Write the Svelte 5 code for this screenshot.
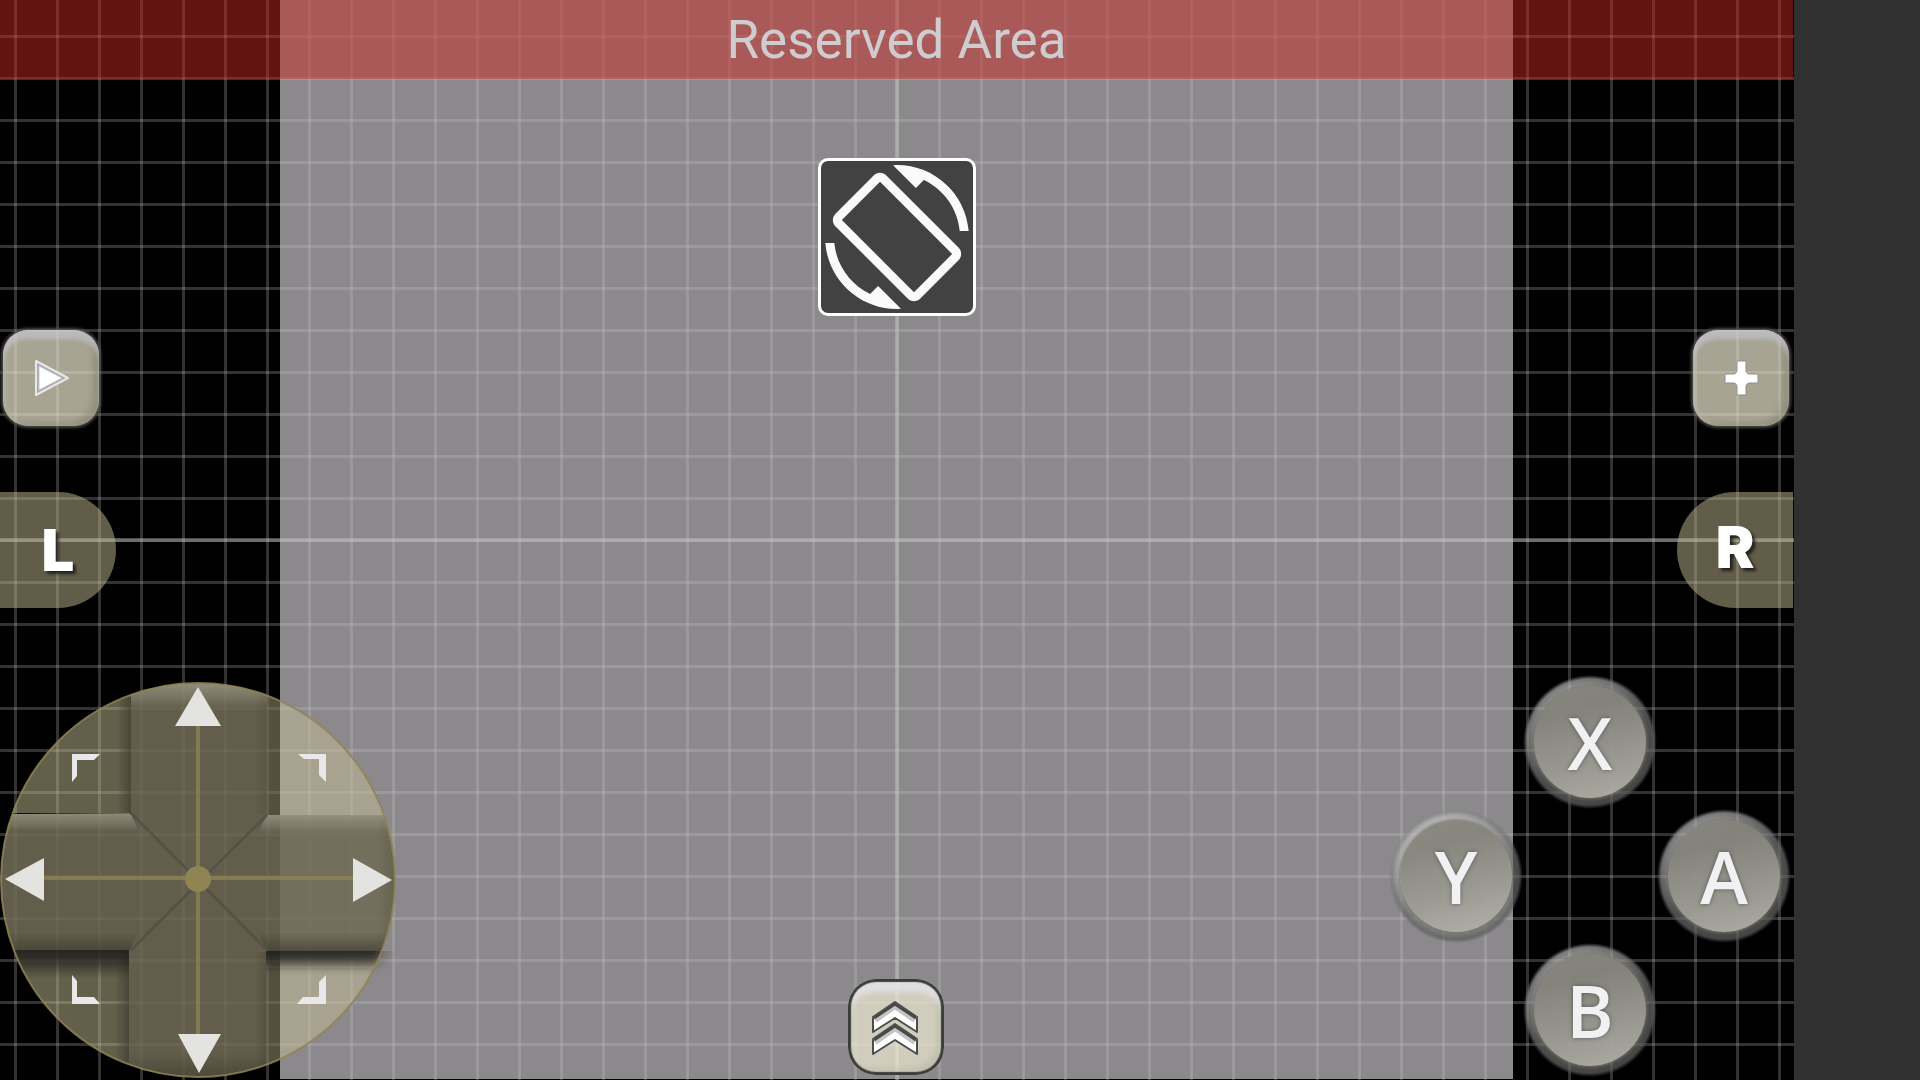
<script>
	const faceButtons = ['X', 'Y', 'A', 'B'];
</script>

<div class="screen">
	<main class="layout">
		<div class="game"></div>
		<div class="grid"></div>
		<div class="axis horizontal"></div>
		<div class="axis vertical"></div>

		<header class="reserved">Reserved Area</header>

		<button class="rotate" aria-label="Rotate screen">
			<svg viewBox="0 0 24 24" width="144" height="144" fill="#fafafa">
				<path d="M16.48 2.52c3.27 1.55 5.61 4.72 5.97 8.48h1.5C23.44 4.84 18.29 0 12 0l-.66.03 3.81 3.81 1.33-1.32zm-6.25-.77c-.59-.59-1.54-.59-2.12 0L1.75 8.11c-.59.59-.59 1.54 0 2.12l12.02 12.02c.59.59 1.54.59 2.12 0l6.36-6.36c.59-.59.59-1.54 0-2.12L10.23 1.75zm4.6 19.44L2.81 9.17l6.36-6.36 12.02 12.02-6.36 6.36zm-7.31.29C4.25 19.94 1.91 16.76 1.55 13H.05C.56 19.16 5.71 24 12 24l.66-.03-3.81-3.81-1.33 1.32z" />
			</svg>
		</button>

		<button class="key play" aria-label="Start">
			<svg viewBox="1 1 96 96" width="96" height="96">
				<path d="M34 32v34l32-17z" fill="#aaa9ad" stroke="#e8e8ea" stroke-width="2" stroke-linejoin="round" />
				<path d="M37 37v24l23-12z" fill="#fff" stroke="#c8c8cc" stroke-width="1" />
			</svg>
		</button>

		<button class="key plus" aria-label="Select">
			<svg viewBox="1 1 96 96" width="96" height="96">
				<path d="M45 32h9v10q1 3 3 3h9v9h-9q-2 0-3 3v9h-9v-9q-1-3-3-3h-9v-9h9q2 0 3-3z" fill="#fff" stroke="#8d8d90" stroke-width="1" />
			</svg>
		</button>

		<button class="shoulder left">L</button>
		<button class="shoulder right">R</button>

		<button class="dpad" aria-label="Directional pad">
			<svg viewBox="0 0 410 410" width="410" height="410">
				<defs>
					<clipPath id="disc"><circle cx="198" cy="210" r="197" /></clipPath>
					<clipPath id="corners">
						<path d="M0 0H131V143H0zM267 0H410V145H267zM0 280H129V410H0zM266 281H410V410H266z" />
					</clipPath>
					<linearGradient id="topEdge" x1="0" y1="0" x2="0" y2="1">
						<stop offset="0" stop-color="#9c9b8c" stop-opacity=".75" />
						<stop offset=".6" stop-color="#8e8d7d" stop-opacity=".45" />
						<stop offset="1" stop-color="#8e8d7d" stop-opacity="0" />
					</linearGradient>
					<linearGradient id="bottomEdge" x1="0" y1="0" x2="0" y2="1">
						<stop offset="0" stop-color="#38362c" stop-opacity="0" />
						<stop offset="1" stop-color="#38362c" stop-opacity=".6" />
					</linearGradient>
					<linearGradient id="sideEdge">
						<stop offset="0" stop-color="#38362c" stop-opacity="0" />
						<stop offset="1" stop-color="#38362c" stop-opacity=".6" />
					</linearGradient>
					<linearGradient id="shadow" x1="0" y1="0" x2="0" y2="1">
						<stop offset="0" stop-color="#20201c" stop-opacity=".9" />
						<stop offset=".35" stop-color="#20201c" stop-opacity=".75" />
						<stop offset="1" stop-color="#20201c" stop-opacity="0" />
					</linearGradient>
					<filter id="soften" x="-20%" y="-100%" width="140%" height="300%">
						<feGaussianBlur stdDeviation="6" />
					</filter>
				</defs>

				<g clip-path="url(#corners)">
					<path d="M250 262H386Q392 284 376 294H250z" fill="#20201c" fill-opacity=".4" filter="url(#soften)" />
				</g>
				<g clip-path="url(#disc)">
					<g clip-path="url(#corners)">
						<rect width="410" height="410" fill="#c4bd94" fill-opacity=".5" />
						<rect x="117" y="0" width="14" height="143" fill="url(#sideEdge)" />
						<rect x="115" y="280" width="14" height="130" fill="url(#sideEdge)" />
						<path d="M267 0h13v145h-13zM266 280h14v130h-14z" fill="#38362c" fill-opacity=".35" />
						<path d="M250 260H386Q392 284 376 293H250z" fill="#20201c" fill-opacity=".9" filter="url(#soften)" />
					</g>
					<path d="M131 0H267V145H410V281H266V410H129V280H0V144H131z" fill="#716b55" fill-opacity=".88" />
					<rect x="131" y="14" width="136" height="24" fill="url(#topEdge)" />
					<path d="M12 144l118-1 9 18H6z" fill="url(#topEdge)" />
					<path d="M267 145h120l5 18H258z" fill="url(#topEdge)" />
					<path d="M0 262h138l-8 18H0zM258 263h150v18H267z" fill="url(#bottomEdge)" />
					<rect x="129" y="382" width="137" height="28" fill="url(#bottomEdge)" />
					<rect x="254" y="20" width="13" height="124" fill="url(#sideEdge)" opacity=".3" />
					<rect x="254" y="282" width="12" height="120" fill="url(#sideEdge)" opacity=".5" />
					<rect x="378" y="150" width="17" height="130" fill="url(#sideEdge)" opacity=".4" />
					<rect x="0" y="280" width="129" height="28" fill="url(#shadow)" />
				</g>

				<path d="M131 143L267 280M267 145L131 280" stroke="#55524b" stroke-width="3" />
				<g stroke="#8f8453" fill="#8f8453">
					<path d="M198 54V366M42 208H356" stroke-width="4" stroke-opacity=".75" />
					<circle cx="198" cy="210" r="197" fill="none" stroke-width="2" stroke-opacity=".85" />
					<circle cx="198" cy="209" r="13" stroke="none" />
				</g>
				<g fill="#e3e4e0">
					<path d="M198 17L221 56H175z" />
					<path d="M199 403L178 364H221z" />
					<path d="M5 209L44 188V231z" />
					<path d="M392 210L353 188V232z" />
				</g>
				<g fill="#e9e8e8">
					<path d="M72 84H100L94 90H77V106L72 112z" />
					<path d="M298 84H326V112L319 105V89H304z" />
					<path d="M72 305L77 311V327H94L100 334H72z" />
					<path d="M326 305V334H297L303 327H319V312z" />
				</g>
			</svg>
		</button>

		<div class="face">
			{#each faceButtons as name}
				<button class={name.toLowerCase()}><span>{name}</span></button>
			{/each}
		</div>

		<button class="key menu" aria-label="Open menu">
			<svg viewBox="1 1 96 96" width="96" height="96">
				<g stroke-linejoin="round">
					<path d="M48 24L70 39V54L48 40L26 54V39z" fill="#fff" stroke="#4c4c4a" stroke-width="2" />
					<path d="M28 42L48 28L68 42" fill="none" stroke="#c5c5c5" stroke-width="6" />
					<path d="M27 40L48 26L69 40" fill="none" stroke="#484848" stroke-width="3" />
					<path d="M48 46L70 61V76L48 62L26 76V61z" fill="#fff" stroke="#4c4c4a" stroke-width="2" />
					<path d="M28 64L48 50L68 64" fill="none" stroke="#c5c5c5" stroke-width="6" />
					<path d="M27 62L48 48L69 62" fill="none" stroke="#484848" stroke-width="3" />
				</g>
			</svg>
		</button>
	</main>
	<aside class="inset"></aside>
</div>

<style>
	:global(body) {
		background: #303030;
		overflow: hidden;
	}

	.screen {
		display: flex;
		height: 100vh;
	}

	.layout {
		position: relative;
		flex: 1;
		overflow: hidden;
		background: #000;
	}

	.inset {
		width: 126px;
		background: #303030;
	}

	.game {
		position: absolute;
		inset: 0 281px 1px 280px;
		background: #8c898c;
	}

	.grid {
		position: absolute;
		inset: 0;
		background-image:
			linear-gradient(90deg, rgba(196, 196, 196, 0.26) 3px, transparent 3px),
			linear-gradient(rgba(196, 196, 196, 0.26) 3px, transparent 3px);
		background-size: 42px 42px;
		background-position: 14px 35px;
	}

	.axis {
		position: absolute;
		background: rgba(200, 200, 200, 0.4);
	}

	.axis.horizontal {
		top: calc(50% - 2px);
		width: 100%;
		height: 4px;
	}

	.axis.vertical {
		left: calc(50% - 2px);
		width: 4px;
		height: 100%;
	}

	.reserved {
		position: relative;
		height: 79px;
		margin-right: 1px;
		background: rgba(200, 40, 34, 0.49);
		color: #cfccd0;
		font-family: Roboto, sans-serif;
		font-size: 53px;
		line-height: 81px;
		text-align: center;
	}

	button {
		box-sizing: border-box;
		padding: 0;
		border: none;
		background: none;
		cursor: pointer;
	}

	svg {
		display: block;
	}

	.rotate {
		position: absolute;
		top: 158px;
		left: calc(50% - 79px);
		display: grid;
		place-items: center;
		width: 158px;
		height: 158px;
		border: 3px solid #fff;
		border-radius: 10px;
		background: #424242;
	}

	.key {
		position: absolute;
		width: 96px;
		height: 96px;
		border-radius: 25px;
		background: rgba(238, 234, 210, 0.7);
		box-shadow:
			0 0 3px 2px rgba(90, 90, 90, 0.8),
			inset 0 10px 4px -1px rgba(200, 200, 215, 0.6),
			inset 4px 0 5px rgba(190, 180, 170, 0.5),
			inset -8px -5px 6px -2px rgba(110, 105, 90, 0.35);
	}

	.play {
		top: 330px;
		left: 3px;
	}

	.plus {
		top: 330px;
		right: 5px;
	}

	.menu {
		bottom: 5px;
		left: calc(50% - 49px);
		border-radius: 28px;
		box-shadow:
			inset 0 0 1px 3px #3a3d39,
			inset 0 14px 5px -1px rgba(228, 226, 232, 0.8),
			inset -7px -6px 5px rgba(170, 165, 145, 0.35);
	}

	.shoulder {
		position: absolute;
		top: 492px;
		width: 116px;
		height: 116px;
		background: rgba(196, 186, 146, 0.5);
		color: #fff;
		font-family: Inter, sans-serif;
		font-size: 58px;
		font-weight: 900;
		line-height: 58px;
		text-shadow: 3px 3px 3px rgba(20, 20, 16, 0.8);
	}

	.shoulder.left {
		left: 0;
		border-radius: 0 58px 58px 0;
	}

	.shoulder.right {
		right: 1px;
		padding-bottom: 6px;
		border-radius: 58px 0 0 58px;
	}

	.dpad {
		position: absolute;
		bottom: 0;
		left: 0;
	}

	.face {
		position: absolute;
		right: 3px;
		bottom: 3px;
		display: grid;
		grid-template-areas:
			'. x .'
			'y . a'
			'. b .';
		grid-template-columns: repeat(3, 134px);
		grid-template-rows: repeat(3, 134px);
	}

	.face button {
		padding: 11px;
		border-radius: 50%;
		background:
			radial-gradient(closest-side, transparent 86%, rgba(60, 60, 60, 0.5) 100%),
			linear-gradient(150deg, rgba(225, 225, 225, 0.66) 15%, rgba(125, 125, 125, 0.64) 55%, rgba(105, 105, 105, 0.64));
		mask-image: radial-gradient(closest-side, #000 94%, transparent 100%);
	}

	.face span {
		display: block;
		border-radius: 50%;
		background: linear-gradient(165deg, rgba(132, 131, 123, 0.92) 25%, rgba(178, 177, 168, 0.9) 90%);
		box-shadow: 0 0 3px 1px rgba(120, 118, 100, 0.8);
		color: #f1f0f2;
		font-family: 'Open Sans', sans-serif;
		font-size: 72px;
		font-weight: 600;
		line-height: 112px;
		text-shadow: 0 0 4px rgba(60, 60, 60, 0.7);
	}

	.x {
		grid-area: x;
	}

	.y {
		grid-area: y;
	}

	.a {
		grid-area: a;
	}

	.b {
		grid-area: b;
	}
</style>
